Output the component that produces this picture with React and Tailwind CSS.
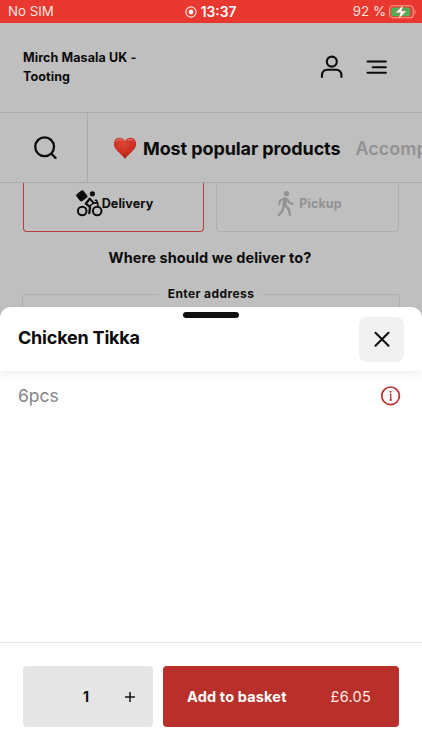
import React, { useState } from "react";

const StatusBar = () => (
    <div className="h-[23px] shrink-0 bg-[#e83830] text-[#ffe3df] flex items-center px-2 pt-px text-[13.3px]">
        <span className="flex-1">No SIM</span>
        <span className="flex items-center gap-[4px] -ml-[4px] font-semibold text-white text-[13.8px]">
            <svg width="12" height="12" viewBox="0 0 12 12" fill="none">
                <circle cx="6" cy="6" r="5.1" stroke="#ffe3df" strokeWidth="1.1" />
                <circle cx="6" cy="6" r="2.4" fill="#fff" />
            </svg>
            13:37
        </span>
        <span className="flex-1 flex items-center justify-end gap-[3px] -mr-[3px]">
            92 %
            <svg width="28" height="16" viewBox="0 0 28 16" fill="none">
                <rect x="0.6" y="1.8" width="23.6" height="12" rx="3.4" stroke="#f5a08f" strokeWidth="1.1" />
                <rect x="2.2" y="3.4" width="19" height="8.8" rx="2" fill="#4fb05a" />
                <path d="M25.6 5.8v4.2c1.3-.4 1.3-3.8 0-4.2Z" fill="#f5a08f" />
                <path d="M14.4 0.8 6.4 8.8h4.9l-2 6.4 8.3-8.3h-4.9Z" fill="#fff" stroke="#c8633f" strokeWidth="0.5" />
            </svg>
        </span>
    </div>
);

const Header = () => (
    <header className="h-[89px] shrink-0 flex items-start justify-between pl-[23px] pr-[34px] pt-[25px]">
        <h1 className="w-[125px] text-[12.5px] leading-[19px] font-bold tracking-[0.1px]">Mirch Masala UK - Tooting</h1>
        <div className="flex gap-[23px] pt-[7px]">
            <svg width="23" height="24" viewBox="0 0 23 24" fill="none" stroke="#0b0b0b" strokeWidth="2.1" strokeLinecap="round">
                <circle cx="11.8" cy="6.6" r="5" />
                <path d="M2 22v-2.2a5 5 0 0 1 5-5h9.4a5 5 0 0 1 5 5V22" />
            </svg>
            <svg width="22" height="24" viewBox="0 0 22 24" fill="none" stroke="#0b0b0b" strokeWidth="2.1" strokeLinecap="round">
                <path d="M1.6 6.5h18.3M6.7 12.2h13.2M1.6 17.7h18.3" />
            </svg>
        </div>
    </header>
);

const Heart = () => (
    <svg width="24" height="23" viewBox="0 0 24 23">
        <defs>
            <radialGradient id="heart" cx="0.45" cy="0.25" r="0.8">
                <stop offset="0" stopColor="#dc4a38" />
                <stop offset="0.6" stopColor="#cb2c20" />
                <stop offset="1" stopColor="#9e1e17" />
            </radialGradient>
        </defs>
        <path d="M12 4.1C10.8 1.9 8.8.8 6.6.8 3.2.8.9 3.6.9 7.1c0 6.2 7.6 9.6 11.1 14.9C15.5 16.7 23.1 13.3 23.1 7.1 23.1 3.6 20.8.8 17.4.8 15.2.8 13.2 1.9 12 4.1Z" fill="url(#heart)" />
        <path d="M3.2 4.4C4.2 2.6 6.7 1.9 8.9 3M14.8 3.1C16.8 1.9 19.4 2.5 20.6 4.2" stroke="#e8897b" strokeWidth="1" strokeLinecap="round" fill="none" />
    </svg>
);

const Categories = () => (
    <nav className="h-[71px] shrink-0 flex border-y border-[#aaaaaa] overflow-hidden">
        <button className="w-[88px] shrink-0 border-r border-[#aaaaaa] flex items-center justify-center pl-[2px]">
            <svg width="24" height="24" viewBox="0 0 24 24" fill="none" stroke="#0b0b0b" strokeWidth="2.3" strokeLinecap="round">
                <circle cx="11.6" cy="10.8" r="9.4" />
                <path d="m18.4 17.7 4.1 4.2" />
            </svg>
        </button>
        <div className="flex items-center whitespace-nowrap text-[18px] font-semibold pl-[25px] pt-px">
            <Heart />
            <span className="ml-[6px] font-bold tracking-[-0.1px]">Most popular products</span>
            <span className="ml-[15px] text-[#929292]">Accompaniments</span>
        </div>
    </nav>
);

const Cyclist = () => (
    <svg width="27" height="27" viewBox="0 0 27 27" fill="none" stroke="#0b0b0b" strokeLinecap="round" strokeLinejoin="round">
        <rect x="1.3" y="1.4" width="9" height="9" rx="1.8" transform="rotate(-38 5.8 5.9)" fill="#0b0b0b" stroke="none" />
        <circle cx="16.4" cy="3.8" r="2.6" fill="#0b0b0b" stroke="none" />
        <circle cx="6.2" cy="21" r="4.3" strokeWidth="2" />
        <circle cx="21.2" cy="21" r="4.3" strokeWidth="2" />
        <path d="M13.7 8.8 9.8 13.7l4.3 3.5-.8 6" strokeWidth="2.3" />
        <path d="m14 8.9 3.6 4h4" strokeWidth="1.9" />
        <path d="M19.3 10.3h1.3l1.5 5.5M17 13.5l-2.5 1.8" strokeWidth="1.5" />
    </svg>
);

const Walker = () => (
    <svg width="18" height="27" viewBox="0 0 18 27" fill="none" stroke="#929292" strokeLinecap="round" strokeLinejoin="round">
        <circle cx="9.5" cy="3.6" r="2.6" fill="#929292" stroke="none" />
        <path d="M8.4 9.1 7.3 15.2" strokeWidth="4" />
        <path d="M6.8 8.6 3 10.7 2.2 14.2M10.2 9.3l2 3.3 3.7 1.5" strokeWidth="1.9" />
        <path d="m8.2 15.6 3.3 3.2 1.6 5.9M6.3 17.6 5.4 20.8 2 25" strokeWidth="2.3" />
    </svg>
);

const DeliveryForm = () => (
    <main className="flex-1 overflow-hidden px-[23px]">
        <div className="flex gap-[12px] text-[12.5px] font-bold tracking-[0.1px]">
            <button className="flex-1 h-[49px] border-[1.5px] border-t-0 border-[#b63d3b] rounded-b flex items-start justify-center pl-[2px] pt-[7px]">
                <Cyclist />
                <span className="pt-[5px] -ml-px">Delivery</span>
            </button>
            <button className="flex-1 h-[49px] border border-t-0 border-[#adadad] rounded-b flex items-start justify-center gap-[4px] pl-[4px] pt-[7px] text-[#929292]">
                <Walker />
                <span className="pt-[5px]">Pickup</span>
            </button>
        </div>
        <h2 className="mt-[15px] -ml-[2px] text-center text-[14.5px] leading-[22px] font-bold tracking-[0.1px]">Where should we deliver to?</h2>
        <fieldset className="mt-[15px] -mx-px h-20 border border-[#aeaeae] rounded">
            <legend className="mx-auto px-[9px] text-[12px] leading-[20px] font-bold tracking-[0.42px]">Enter address</legend>
        </fieldset>
    </main>
);

const ProductSheet = () => {
    const [quantity, setQuantity] = useState(1);

    return (
        <section className="absolute inset-x-0 bottom-0 h-[443px] bg-white rounded-t-[11px] flex flex-col">
            <div className="relative h-[64px] shrink-0 flex items-center justify-between px-[18px] rounded-t-[11px] shadow-[0_4px_10px_rgba(0,0,0,0.06)]">
                <div className="absolute top-[5px] left-[183px] w-[56px] h-[6px] rounded-full bg-[#101010]" />
                <h3 className="text-[18px] font-bold tracking-[-0.2px] -mt-[3px]">Chicken Tikka</h3>
                <button className="w-[45px] h-[45px] rounded-[8px] bg-[#f1f1f1] flex items-center justify-center">
                    <svg width="16" height="16" viewBox="0 0 16 16" stroke="#0b0b0b" strokeWidth="2" strokeLinecap="round">
                        <path d="m1.5 1.8 13 13M14.5 1.8l-13 13" />
                    </svg>
                </button>
            </div>
            <div className="flex-1 flex items-start justify-between pl-[18px] pr-[21px] pt-[11px]">
                <p className="text-[17.5px] leading-[27px] text-[#858585]">6pcs</p>
                <svg className="mt-[4px]" width="20" height="20" viewBox="0 0 20 20" fill="none" stroke="#b92d2c">
                    <circle cx="9.6" cy="9.8" r="8.8" strokeWidth="1.7" />
                    <path d="M8.8 8.4h.9V14M8.600 14h2.200" strokeWidth="1.300" />
                    <circle cx="9.600" cy="5.800" r="1" fill="#b92d2c" stroke="none" />
                </svg>
            </div>
            <footer className="h-[108px] shrink-0 border-t border-[#e2e2e2] flex gap-[10px] px-[23px] pt-[23px]">
                <div className="w-[130px] h-[61px] rounded bg-[#e5e5e5] flex items-center justify-end pr-[17px]">
                    <span className="text-[14px] font-bold mr-[35px]">{quantity}</span>
                    <button className="pt-px" onClick={() => setQuantity(quantity + 1)}>
                        <svg width="12" height="12" viewBox="0 0 12 12" stroke="#151515" strokeWidth="1.5">
                            <path d="M6 1v10M1 6h10" />
                        </svg>
                    </button>
                </div>
                <button className="flex-1 h-[61px] rounded bg-[#b92f2a] text-white flex items-center justify-between pl-[24px] pr-[28px] text-[14.5px]">
                    <span className="font-bold tracking-[0.16px]">Add to basket</span>
                    <span className="text-[#ffe9e6] tracking-[0.25px]">£{(6.05 * quantity).toFixed(2)}</span>
                </button>
            </footer>
        </section>
    );
};

const App = () => {
    return (
        <div className="relative w-full h-[750px] overflow-hidden flex flex-col bg-[#bfbfbf] text-[#0b0b0b] font-['Inter',sans-serif]">
            <StatusBar />
            <Header />
            <Categories />
            <DeliveryForm />
            <ProductSheet />
        </div>
    );
};

export default App;
